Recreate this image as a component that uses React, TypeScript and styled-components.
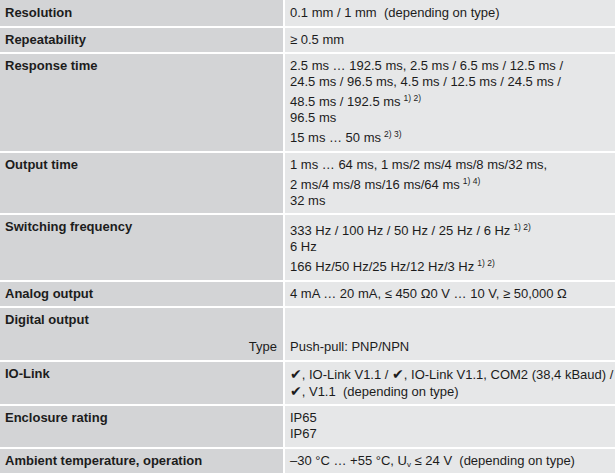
import React from "react";
import styled, { createGlobalStyle } from "styled-components";

const GlobalStyle = createGlobalStyle`
  html, body {
    margin: 0;
    padding: 0;
    background: #ffffff;
  }
  body {
    font-family: "Liberation Sans", Arial, sans-serif;
    color: #1c1c1c;
  }
`;

const Table = styled.div`
  display: grid;
  grid-template-columns: 283px 1fr;
  column-gap: 2px;
  row-gap: 2px;
  width: 615px;
  background: #ffffff;
`;

const Label = styled.div<{ $first?: boolean }>`
  background: #d3d4d6;
  padding: ${(p) => (p.$first ? "5px" : "4px")} 6px 4.5px 5px;
  font-size: 13px;
  line-height: 16px;
  font-weight: bold;
`;

const Value = styled.div<{ $first?: boolean }>`
  background: #e6e7e8;
  padding: ${(p) => (p.$first ? "5px" : "4px")} 6px 4.5px 5px;
  font-size: 13px;
  line-height: 16px;
`;

const Line = styled.div<{ $sup?: boolean; $drop?: number }>`
  white-space: nowrap;
  padding-top: ${(p) => (p.$sup ? 4 : 0)}px;
  margin-top: ${(p) => p.$drop ?? 0}px;
`;

const SubLabel = styled.div`
  margin-top: 11px;
  text-align: right;
  font-weight: normal;
`;

const Sup = styled.span`
  font-size: 8.5px;
  line-height: 0;
  vertical-align: 5px;
  margin-left: 3px;
`;

const Sub = styled.span`
  font-size: 8px;
  line-height: 0;
  vertical-align: -2px;
`;

const Check = styled.span`
  font-family: "DejaVu Sans", sans-serif;
  font-size: 14px;
  font-weight: bold;
`;

export default function App() {
  return (
    <>
      <GlobalStyle />
      <Table>
        <Label $first>Resolution</Label>
        <Value $first>0.1 mm / 1 mm&nbsp; (depending on type)</Value>

        <Label>Repeatability</Label>
        <Value>≥ 0.5 mm</Value>

        <Label>Response time</Label>
        <Value>
          <Line>2.5 ms … 192.5 ms, 2.5 ms / 6.5 ms / 12.5 ms /</Line>
          <Line>24.5 ms / 96.5 ms, 4.5 ms / 12.5 ms / 24.5 ms /</Line>
          <Line $sup>
            48.5 ms / 192.5 ms<Sup>1) 2)</Sup>
          </Line>
          <Line>96.5 ms</Line>
          <Line $sup>
            15 ms … 50 ms<Sup>2) 3)</Sup>
          </Line>
        </Value>

        <Label>Output time</Label>
        <Value>
          <Line>1 ms … 64 ms, 1 ms/2 ms/4 ms/8 ms/32 ms,</Line>
          <Line $sup>
            2 ms/4 ms/8 ms/16 ms/64 ms<Sup>1) 4)</Sup>
          </Line>
          <Line>32 ms</Line>
        </Value>

        <Label>Switching frequency</Label>
        <Value>
          <Line $sup>
            333 Hz / 100 Hz / 50 Hz / 25 Hz / 6 Hz<Sup>1) 2)</Sup>
          </Line>
          <Line>6 Hz</Line>
          <Line $sup>
            166 Hz/50 Hz/25 Hz/12 Hz/3 Hz<Sup>1) 2)</Sup>
          </Line>
        </Value>

        <Label>Analog output</Label>
        <Value>4 mA … 20 mA, ≤ 450 Ω0 V … 10 V, ≥ 50,000 Ω</Value>

        <Label>
          Digital output
          <SubLabel>Type</SubLabel>
        </Label>
        <Value>
          <Line $drop={27}>Push-pull: PNP/NPN</Line>
        </Value>

        <Label>IO-Link</Label>
        <Value>
          <Line>
            <Check>✔</Check>, IO-Link V1.1 / <Check>✔</Check>, IO-Link V1.1, COM2 (38,4 kBaud) /
          </Line>
          <Line>
            <Check>✔</Check>, V1.1&nbsp; (depending on type)
          </Line>
        </Value>

        <Label>Enclosure rating</Label>
        <Value>
          <Line>IP65</Line>
          <Line>IP67</Line>
        </Value>

        <Label>Ambient temperature, operation</Label>
        <Value>
          –30 °C … +55 °C, U<Sub>v</Sub> ≤ 24 V&nbsp; (depending on type)
        </Value>
      </Table>
    </>
  );
}
